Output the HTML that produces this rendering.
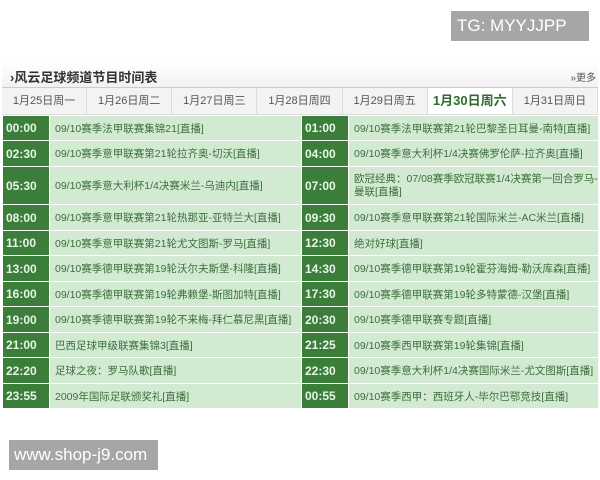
<!DOCTYPE html>
<html><head><meta charset="utf-8"><style>
body{margin:0;width:600px;height:480px;background:#fff;position:relative;overflow:hidden;font-family:"Liberation Sans","Noto Sans CJK SC",sans-serif}
.tg{position:absolute;left:451px;top:11px;width:138px;height:30px;background:#a6a6a6;color:#fff;font-size:17px;line-height:30px;padding-left:6px;box-sizing:border-box}
.www{position:absolute;left:9px;top:440px;width:149px;height:30px;background:#a6a6a6;color:#fff;font-size:17px;line-height:30px;padding-left:5px;box-sizing:border-box}
.title{position:absolute;left:2px;top:62px;width:596px;height:25px;background:linear-gradient(#fff,#f2f2f2);border-bottom:1px solid #ccc}
.title b{position:absolute;left:8px;top:5px;font-size:13px;color:#333}
.title span{position:absolute;right:2px;top:7px;font-size:10px;color:#555}
.tabs{position:absolute;left:2px;top:88px;width:596px;height:26px;display:flex;background:#f3f3f3;border-bottom:1px solid #ddd}
.tabs div{flex:1;text-align:center;font-size:11px;line-height:26px;color:#555;border-right:1px solid #ddd;white-space:nowrap}
.tabs .a{background:#fff;color:#2e6b2e;font-weight:bold;font-size:13px}
.r{position:absolute;left:3px;width:595px}
.r div{position:absolute;top:0;bottom:0;display:flex;align-items:center;font-size:10.5px;color:#3c6e3c;background:#d2ead2;overflow:hidden;white-space:nowrap}
.r .t{background:#3a7e3a;color:#e8f5e8;font-weight:bold;font-size:12px;padding-left:3px}
.r .t1{left:0;width:43px}.r .x1{left:47px;width:251px;padding-left:5px;box-sizing:border-box}
.r .t2{left:299px;width:43px}.r .x2{left:346px;width:249px;padding-left:5px;box-sizing:border-box}
.r .w{white-space:normal;line-height:13px}
</style></head><body>
<div class="tg">TG: MYYJJPP</div>
<div class="title"><b>›风云足球频道节目时间表</b><span>»更多</span></div>
<div class="tabs"><div>1月25日周一</div><div>1月26日周二</div><div>1月27日周三</div><div>1月28日周四</div><div>1月29日周五</div><div class="a">1月30日周六</div><div>1月31日周日</div></div>
<div class="r" style="top:116px;height:24px"><div class="t t1">00:00</div><div class="x1">09/10赛季法甲联赛集锦21[直播]</div><div class="t t2">01:00</div><div class="x2">09/10赛季法甲联赛第21轮巴黎圣日耳曼-南特[直播]</div></div>
<div class="r" style="top:141px;height:25px"><div class="t t1">02:30</div><div class="x1">09/10赛季意甲联赛第21轮拉齐奥-切沃[直播]</div><div class="t t2">04:00</div><div class="x2">09/10赛季意大利杯1/4决赛佛罗伦萨-拉齐奥[直播]</div></div>
<div class="r" style="top:167px;height:37px"><div class="t t1">05:30</div><div class="x1">09/10赛季意大利杯1/4决赛米兰-乌迪内[直播]</div><div class="t t2">07:00</div><div class="x2 w">欧冠经典：07/08赛季欧冠联赛1/4决赛第一回合罗马-曼联[直播]</div></div>
<div class="r" style="top:205px;height:25px"><div class="t t1">08:00</div><div class="x1">09/10赛季意甲联赛第21轮热那亚-亚特兰大[直播]</div><div class="t t2">09:30</div><div class="x2">09/10赛季意甲联赛第21轮国际米兰-AC米兰[直播]</div></div>
<div class="r" style="top:231px;height:24px"><div class="t t1">11:00</div><div class="x1">09/10赛季意甲联赛第21轮尤文图斯-罗马[直播]</div><div class="t t2">12:30</div><div class="x2">绝对好球[直播]</div></div>
<div class="r" style="top:256px;height:25px"><div class="t t1">13:00</div><div class="x1">09/10赛季德甲联赛第19轮沃尔夫斯堡-科隆[直播]</div><div class="t t2">14:30</div><div class="x2">09/10赛季德甲联赛第19轮霍芬海姆-勒沃库森[直播]</div></div>
<div class="r" style="top:282px;height:24px"><div class="t t1">16:00</div><div class="x1">09/10赛季德甲联赛第19轮弗赖堡-斯图加特[直播]</div><div class="t t2">17:30</div><div class="x2">09/10赛季德甲联赛第19轮多特蒙德-汉堡[直播]</div></div>
<div class="r" style="top:307px;height:25px"><div class="t t1">19:00</div><div class="x1">09/10赛季德甲联赛第19轮不来梅-拜仁慕尼黑[直播]</div><div class="t t2">20:30</div><div class="x2">09/10赛季德甲联赛专题[直播]</div></div>
<div class="r" style="top:333px;height:24px"><div class="t t1">21:00</div><div class="x1">巴西足球甲级联赛集锦3[直播]</div><div class="t t2">21:25</div><div class="x2">09/10赛季西甲联赛第19轮集锦[直播]</div></div>
<div class="r" style="top:358px;height:25px"><div class="t t1">22:20</div><div class="x1">足球之夜：罗马队歌[直播]</div><div class="t t2">22:30</div><div class="x2">09/10赛季意大利杯1/4决赛国际米兰-尤文图斯[直播]</div></div>
<div class="r" style="top:384px;height:24px"><div class="t t1">23:55</div><div class="x1">2009年国际足联颁奖礼[直播]</div><div class="t t2">00:55</div><div class="x2">09/10赛季西甲：西班牙人-毕尔巴鄂竞技[直播]</div></div>
<div class="www">www.shop-j9.com</div>
</body></html>
